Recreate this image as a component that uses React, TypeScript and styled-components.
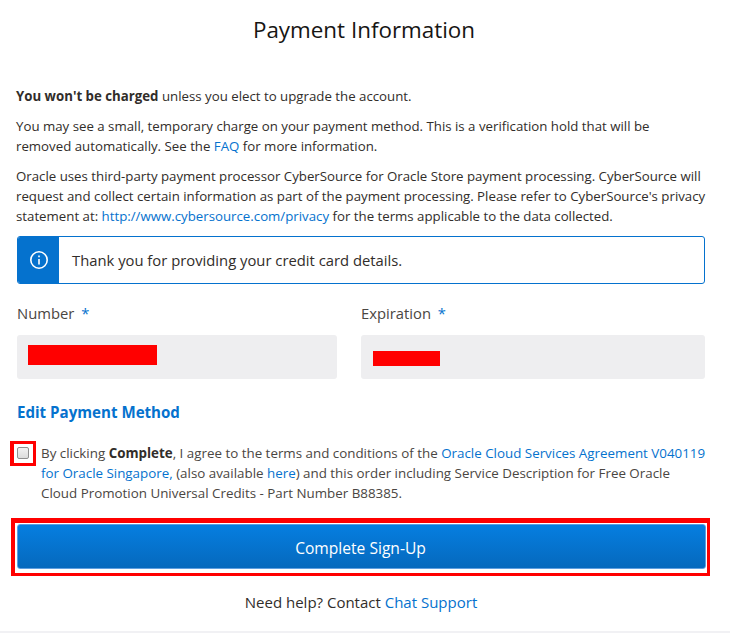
import React from "react";
import styled, { createGlobalStyle } from "styled-components";

const Global = createGlobalStyle`
  html, body { margin: 0; padding: 0; background: #fff; }
  body { font-family: "Open Sans", "Noto Sans", sans-serif; color: #312d2a; }
  #root { height: 633px; overflow: hidden; }
`;

const Page = styled.div`
  height: 633px;
  box-sizing: border-box;
  border-bottom: 2px solid #f1f1f4;
  padding: 0 25px 0 17px;
`;

const Title = styled.h1`
  margin: 0;
  padding: 14px 0 0 6px;
  height: 86px;
  box-sizing: border-box;
  text-align: center;
  font-size: 22.4px;
  line-height: 32px;
  font-weight: 400;
  color: #161513;
`;

const Para = styled.p`
  margin: 0 0 10px -1px;
  font-size: 13.26px;
  line-height: 20px;
  white-space: nowrap;
`;

const A = styled.a`
  color: #0572ce;
  text-decoration: none;
`;

const Alert = styled.div`
  display: flex;
  height: 48px;
  box-sizing: border-box;
  border: 1px solid #0572ce;
  border-radius: 3px;
  overflow: hidden;
`;

const AlertIcon = styled.div`
  width: 41px;
  background: #0572ce;
  display: flex;
  align-items: center;
  justify-content: center;
`;

const AlertText = styled.div`
  padding-left: 13px;
  font-size: 14.8px;
  line-height: 46px;
  color: #312d2a;
`;

const Fields = styled.div`
  display: grid;
  grid-template-columns: 320px 344px;
  column-gap: 24px;
  margin-top: 17px;
`;

const Field = styled.div`
  display: flex;
  flex-direction: column;
`;

const Label = styled.label`
  font-size: 14.8px;
  line-height: 24px;
  height: 34px;
  color: #4a4642;
  i { font-style: normal; color: #0572ce; margin-left: 3px; }
`;

const Input = styled.div<{ $top: number }>`
  height: 44px;
  box-sizing: border-box;
  background: #eeeef0;
  border-radius: 3px;
  padding: ${p => p.$top}px 0 0 11px;
`;

const Redact = styled.div<{ $w: number; $h: number; $left?: number }>`
  width: ${p => p.$w}px;
  height: ${p => p.$h}px;
  margin-left: ${p => p.$left ?? 0}px;
  background: #ff0000;
`;

const EditLink = styled(A)`
  display: block;
  margin-top: 22px;
  font-size: 15.1px;
  line-height: 22px;
  font-weight: 700;
`;

const Agree = styled.div`
  display: flex;
  margin-top: 20px;
`;

const CheckCell = styled.div`
  flex: none;
  width: 24px;
  height: 20px;
  position: relative;
`;

const Check = styled.span`
  position: absolute;
  left: 0;
  top: 4px;
  width: 12px;
  height: 12px;
  box-sizing: border-box;
  border: 1px solid #8f8f8f;
  border-radius: 2px;
  background: linear-gradient(#f2f2f2, #dcdcdc);
`;

const CheckFrame = styled.span`
  position: absolute;
  left: -7px;
  top: -2px;
  width: 26px;
  height: 25px;
  box-sizing: border-box;
  border: 3px solid #ff0000;
  border-left-width: 4px;
`;

const AgreeText = styled.div`
  font-size: 13.36px;
  line-height: 20px;
  white-space: nowrap;
  color: #4a4642;
  b { color: #312d2a; font-weight: 700; }
`;

const SignUpFrame = styled.div`
  margin: 15px -5px 0 -6px;
  border-style: solid;
  border-color: #ff0000;
  border-width: 5px 3px 3px 4px;
  padding: 1px 1px 4px 2px;
`;

const SignUp = styled.button`
  display: block;
  width: 100%;
  height: 45px;
  padding: 3px 2px 0 0;
  border: 1px solid #5f9fe0;
  border-radius: 3px;
  background: linear-gradient(#067ee0, #0569bd);
  color: #fff;
  font-family: inherit;
  font-size: 15.6px;
`;

const Help = styled.div`
  margin-top: 15px;
  text-align: center;
  font-size: 15px;
  line-height: 22px;
  color: #312d2a;
`;

export default function App() {
  return (
    <Page>
      <Global />
      <Title>Payment Information</Title>
      <Para><b>You won't be charged</b> unless you elect to upgrade the account.</Para>
      <Para>
        You may see a small, temporary charge on your payment method. This is a verification hold that will be<br />
        removed automatically. See the <A href="#">FAQ</A> for more information.
      </Para>
      <Para>
        Oracle uses third-party payment processor CyberSource for Oracle Store payment processing. CyberSource will<br />
        request and collect certain information as part of the payment processing. Please refer to CyberSource's privacy<br />
        statement at: <A href="#">http://www.cybersource.com/privacy</A> for the terms applicable to the data collected.
      </Para>
      <Alert>
        <AlertIcon>
          <svg width="20" height="20" viewBox="0 0 20 20" fill="none" stroke="#fff" strokeWidth="1.6">
            <circle cx="10" cy="10" r="8.2" />
            <path d="M10 9v5.5" />
            <path d="M10 5.4v1.8" />
          </svg>
        </AlertIcon>
        <AlertText>Thank you for providing your credit card details.</AlertText>
      </Alert>
      <Fields>
        <Field>
          <Label>Number <i>*</i></Label>
          <Input $top={10}><Redact $w={129} $h={20} /></Input>
        </Field>
        <Field>
          <Label>Expiration <i>*</i></Label>
          <Input $top={16}><Redact $w={67} $h={15} $left={1} /></Input>
        </Field>
      </Fields>
      <EditLink href="#">Edit Payment Method</EditLink>
      <Agree>
        <CheckCell><Check /><CheckFrame /></CheckCell>
        <AgreeText>
          By clicking <b>Complete</b>, I agree to the terms and conditions of the <A href="#">Oracle Cloud Services Agreement V040119</A><br />
          <A href="#">for Oracle Singapore,</A> (also available <A href="#">here</A>) and this order including Service Description for Free Oracle<br />
          Cloud Promotion Universal Credits - Part Number B88385.
        </AgreeText>
      </Agree>
      <SignUpFrame><SignUp>Complete Sign-Up</SignUp></SignUpFrame>
      <Help>Need help? Contact <A href="#">Chat Support</A></Help>
    </Page>
  );
}
